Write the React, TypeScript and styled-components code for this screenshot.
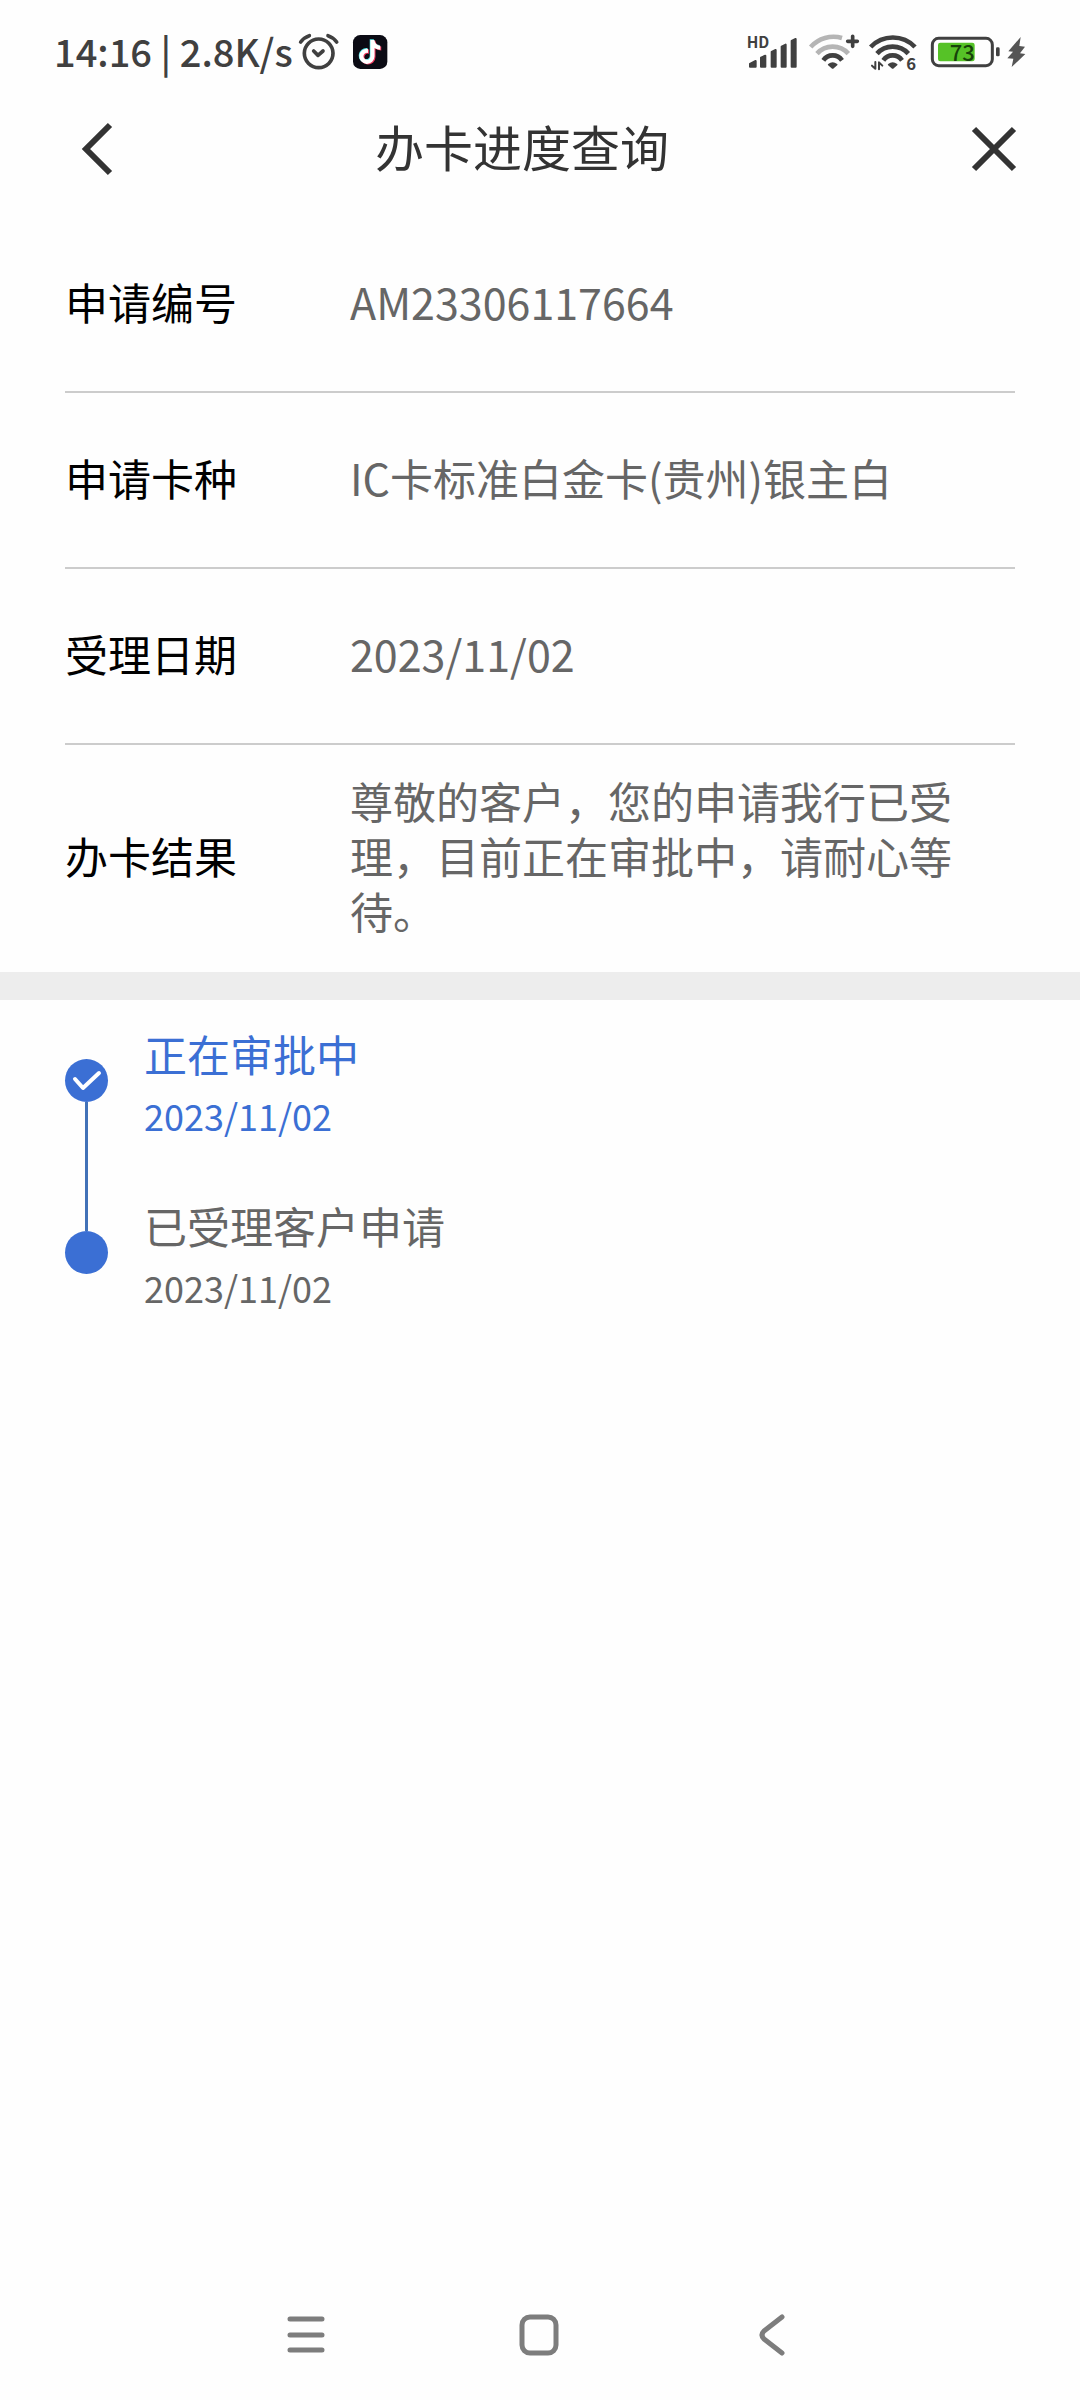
import React from "react";
import styled, { createGlobalStyle } from "styled-components";

const INK = "#404040";
const BLUE = "#3b6fd4";

const GlobalStyle = createGlobalStyle`
  *, *::before, *::after { box-sizing: border-box; }
  body {
    margin: 0;
    background: #fefefe;
    font-family: "Noto Sans CJK SC", "Noto Sans", sans-serif;
  }
`;

const Screen = styled.div`
  display: flex;
  flex-direction: column;
  min-height: 100vh;
`;

const StatusBar = styled.div`
  display: flex;
  align-items: center;
  justify-content: space-between;
  height: 104px;
  padding: 0 53px 0 54px;
  color: ${INK};
`;

const StatusGroup = styled.div<{ $gap: number }>`
  display: flex;
  align-items: center;
  gap: ${(p) => p.$gap}px;
`;

const StatusText = styled.span`
  padding-bottom: 2px;
  font-size: 38px;
  line-height: 48px;
  font-weight: 500;
  margin-right: -9px;
`;

const Glyph = styled.svg`
  display: block;
  flex: none;
  overflow: visible;
  fill: none;
  stroke-linecap: round;
  stroke-linejoin: round;
`;

const TitleBar = styled.header`
  display: flex;
  align-items: center;
  height: 90px;
  padding: 0 64px 0 80px;
`;

const IconButton = styled.button`
  display: flex;
  align-items: center;
  justify-content: center;
  flex: none;
  padding: 0;
  border: 0;
  background: none;
  color: #333;
  cursor: pointer;
`;

const Title = styled.h1`
  flex: 1;
  margin: 0;
  padding: 0 40px 6px 0;
  text-align: center;
  font-size: 49px;
  line-height: 60px;
  font-weight: 400;
  color: #333;
`;

const Details = styled.dl`
  margin: 23px 0 0;
  padding: 0 65px;
`;

const DetailRow = styled.div`
  display: flex;
  align-items: center;
  min-height: 176px;
  padding: 28px 0 34px;
  border-bottom: 2px solid #ccc;

  &:last-child { border-bottom: 0; }
`;

const Label = styled.dt`
  flex: none;
  width: 285px;
  font-size: 43px;
  line-height: 55px;
  color: #000;
`;

const Value = styled.dd`
  flex: 1;
  margin: 0;
  padding-right: 30px;
  font-size: 43px;
  line-height: 55px;
  color: #666;
`;

const Band = styled.div`
  height: 28px;
  background: #ededed;
`;

const Timeline = styled.ol`
  flex: 1;
  margin: 0;
  padding: 22px 65px;
  list-style: none;
`;

const Step = styled.li`
  display: flex;
  gap: 36px;
`;

const Rail = styled.div`
  display: flex;
  flex-direction: column;
  align-items: center;
  width: 43px;
`;

const Connector = styled.div<{ $visible: boolean; $lead?: boolean }>`
  width: 3px;
  flex: ${(p) => (p.$lead ? "0 0 37px" : "1")};
  background: ${(p) => (p.$visible ? "#4272b8" : "transparent")};
`;

const Marker = styled.div`
  display: flex;
  align-items: center;
  justify-content: center;
  width: 43px;
  height: 43px;
  border-radius: 50%;
  background: ${BLUE};
`;

const StepBody = styled.div<{ $active: boolean }>`
  padding-bottom: 48px;
  line-height: 62px;
  color: ${(p) => (p.$active ? BLUE : "#666")};
`;

const StepName = styled.div`
  font-size: 43px;
`;

const StepDate = styled.time`
  display: block;
  font-size: 36px;
`;

const SystemNav = styled.nav`
  display: flex;
  justify-content: center;
  padding: 0 2px 20px 0;
`;

const NavButton = styled(IconButton)`
  width: 233px;
  height: 90px;
  color: #7d7d7d;
`;

const AlarmIcon = () => (
  <Glyph width="39" height="36" viewBox="777 42 117 108" stroke={INK} strokeWidth="11" aria-hidden>
    <circle cx="836" cy="100" r="43" />
    <path d="M782 66Q792 52 808 47M864 47Q880 52 890 66M821 93L834 106L849 93" />
  </Glyph>
);

const NOTE =
  "M448,209.91a210.06,210.06,0,0,1-122.77-39.25V349.38A162.55,162.55,0,1,1,185,188.31V278.2a74.62,74.62,0,1,0,52.23,71.18V0l88,0a121.18,121.18,0,0,0,1.86,22.17h0A122.18,122.18,0,0,0,381,102.39a121.43,121.43,0,0,0,67,20.14Z";

const TikTokIcon = () => (
  <Glyph width="35" height="36" viewBox="939 42 105 108" aria-hidden>
    <rect x="939" y="45" width="103" height="102" rx="22" fill="#0b0b14" />
    <path d={NOTE} fill="#4fe3e6" transform="translate(956 58) scale(.14)" />
    <path d={NOTE} fill="#f03a5f" transform="translate(961 62) scale(.14)" />
    <path d={NOTE} fill="#fff" transform="translate(958 60) scale(.14)" />
  </Glyph>
);

const SignalIcon = () => (
  <Glyph width="53" height="36" viewBox="48 42 159 108" fill={INK} aria-label="HD">
    <text x="50" y="84" fontSize="46" fontWeight="700" fill={INK}>HD</text>
    <path
      d="M60 132L77 123V140H60ZM93 113L106 107V140H93ZM125 96L137 90V140H125ZM155 80L167 74V140H155ZM185 63L197 57V140H185Z"
      fill={INK}
      stroke={INK}
      strokeWidth="6"
    />
  </Glyph>
);

const WifiPlusIcon = () => (
  <Glyph width="57" height="36" viewBox="225 42 171 108" strokeWidth="14" aria-hidden>
    <g strokeLinecap="butt">
      <path d="M242 81A92 92 0 0 1 336 54M261 101A63 63 0 0 1 355 101" stroke="#b5b5b5" />
      <path d="M280 121A34 34 0 0 1 336 121" stroke={INK} />
    </g>
    <path d="M296 134Q308 125 320 134L308 144Z" fill={INK} stroke={INK} strokeWidth="5" />
    <path d="M353 64H382M368 49V79" stroke={INK} strokeWidth="11" />
  </Glyph>
);

const WifiSixIcon = () => (
  <Glyph width="52" height="36" viewBox="414 42 156 108" stroke={INK} strokeWidth="14" aria-hidden>
    <path strokeLinecap="butt" d="M422 81A92 92 0 0 1 555 81M441 101A63 63 0 0 1 535 101M460 121A34 34 0 0 1 516 121" />
    <path d="M476 134Q488 125 500 134L488 144Z" fill={INK} strokeWidth="5" />
    <path d="M436 126V146L426 137M447 148V127L457 137" strokeWidth="6" />
    <text x="529" y="149" fontSize="50" fontWeight="700" fill={INK} stroke="none">6</text>
  </Glyph>
);

const BatteryIcon = () => (
  <Glyph width="75" height="36" viewBox="588 42 225 108" aria-label="73%">
    <rect x="607" y="55" width="180" height="82" rx="19" stroke={INK} strokeWidth="9" />
    <rect x="624" y="68" width="110" height="56" rx="7" fill="#56c227" />
    <rect x="798" y="82" width="11" height="27" rx="4" fill={INK} />
    <text x="697" y="122" fontSize="66" fontWeight="500" textAnchor="middle" fill="#17420a">73</text>
  </Glyph>
);

const BoltIcon = () => (
  <Glyph width="20" height="36" viewBox="831 42 60 108" aria-hidden>
    <path d="M872 51L835 94L849 95L832 115L850 116L845 141L886 102L870 100L885 80L868 78Z" fill="#555" />
  </Glyph>
);

const details = [
  { label: "申请编号", value: "AM23306117664" },
  { label: "申请卡种", value: "IC卡标准白金卡(贵州)银主白" },
  { label: "受理日期", value: "2023/11/02" },
  { label: "办卡结果", value: "尊敬的客户，您的申请我行已受理，目前正在审批中，请耐心等待。" },
];

const steps = [
  { name: "正在审批中", date: "2023/11/02" },
  { name: "已受理客户申请", date: "2023/11/02" },
];

export default function App() {
  return (
    <Screen>
      <GlobalStyle />
      <StatusBar>
        <StatusGroup $gap={15}>
          <StatusText>14:16 | 2.8K/s</StatusText>
          <AlarmIcon />
          <TikTokIcon />
        </StatusGroup>
        <StatusGroup $gap={6}>
          <SignalIcon />
          <WifiPlusIcon />
          <WifiSixIcon />
          <BatteryIcon />
          <BoltIcon />
        </StatusGroup>
      </StatusBar>

      <TitleBar>
        <IconButton type="button" aria-label="返回">
          <Glyph width="32" height="52" viewBox="0 0 32 52" stroke="currentColor" strokeWidth="6">
            <path strokeLinecap="butt" strokeLinejoin="miter" d="M30 2L6 26L30 50" />
          </Glyph>
        </IconButton>
        <Title>办卡进度查询</Title>
        <IconButton type="button" aria-label="关闭">
          <Glyph width="44" height="44" viewBox="0 0 44 44" stroke="currentColor" strokeWidth="6">
            <path strokeLinecap="butt" d="M2 2L42 42M42 2L2 42" />
          </Glyph>
        </IconButton>
      </TitleBar>

      <Details>
        {details.map((d) => (
          <DetailRow key={d.label}>
            <Label>{d.label}</Label>
            <Value>{d.value}</Value>
          </DetailRow>
        ))}
      </Details>

      <Band />

      <Timeline>
        {steps.map((s, i) => (
          <Step key={s.name}>
            <Rail>
              <Connector $lead $visible={i > 0} />
              <Marker>
                {i === 0 && (
                  <Glyph width="30" height="22" viewBox="0 0 30 22" stroke="#fff" strokeWidth="4">
                    <path d="M3 9L11 18L27 3" />
                  </Glyph>
                )}
              </Marker>
              <Connector $visible={i < steps.length - 1} />
            </Rail>
            <StepBody $active={i === 0}>
              <StepName>{s.name}</StepName>
              <StepDate>{s.date}</StepDate>
            </StepBody>
          </Step>
        ))}
      </Timeline>

      <SystemNav>
        <NavButton type="button" aria-label="最近任务">
          <Glyph width="38" height="38" viewBox="0 0 38 38" stroke="currentColor" strokeWidth="5">
            <path d="M3 3H35M3 19H35M3 34H35" />
          </Glyph>
        </NavButton>
        <NavButton type="button" aria-label="主屏幕">
          <Glyph width="40" height="42" viewBox="0 0 40 42" stroke="currentColor" strokeWidth="5">
            <rect x="3" y="3" width="34" height="36" rx="8" />
          </Glyph>
        </NavButton>
        <NavButton type="button" aria-label="返回上一页">
          <Glyph width="26" height="42" viewBox="0 0 26 42" stroke="currentColor" strokeWidth="5">
            <path d="M23 3L5 17Q1 21 5 25L23 39" />
          </Glyph>
        </NavButton>
      </SystemNav>
    </Screen>
  );
}
